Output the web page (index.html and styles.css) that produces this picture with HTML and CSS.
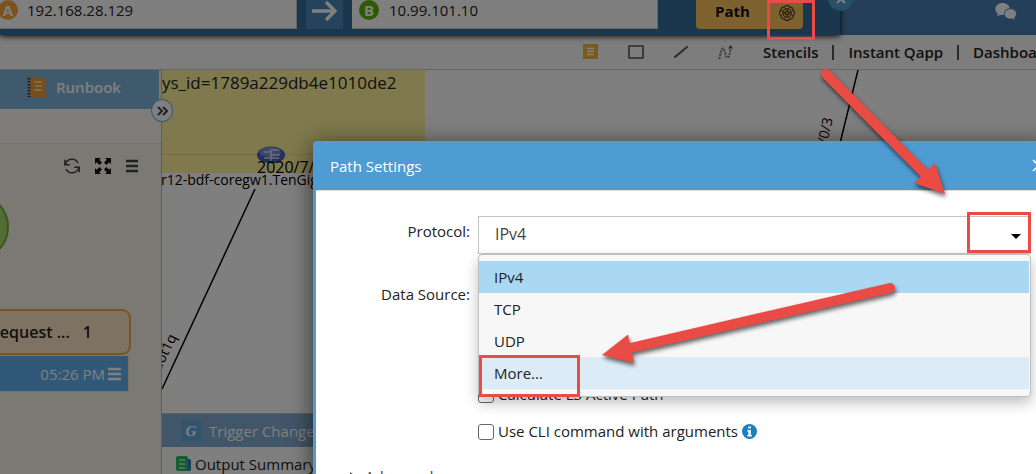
FILE: index.html
```html
<!DOCTYPE html>
<html lang="en">
<head>
<meta charset="utf-8">
<title>Path Settings</title>
<link rel="stylesheet" href="styles.css">
</head>
<body>
<div class="app">
  <header class="topbar">
    <form class="pathbar">
      <label class="endpoint source"><span class="badge badge-a">A</span><input type="text" value="192.168.28.129" aria-label="Source"></label>
      <button type="button" class="go" aria-label="Swap"><svg width="28" height="22" viewBox="0 0 28 22" fill="none" stroke="#fff" stroke-width="3.4"><path d="M1 11h24M15 2l9 9-9 9"/></svg></button>
      <label class="endpoint target"><span class="badge badge-b">B</span><input type="text" value="10.99.101.10" aria-label="Destination"></label>
      <div class="path-group">
        <button type="button" class="path-btn">Path</button>
        <button type="button" class="gear-btn" aria-label="Path settings"><svg width="16" height="16" viewBox="0 0 16 16" fill="none" stroke="#5c4a26" stroke-width="1.300"><path d="M5.500 2.200a2.600 2.600 0 0 1 5 0 2.600 2.600 0 0 1 3.300 3.300 2.600 2.600 0 0 1 0 5 2.600 2.600 0 0 1-3.300 3.300 2.600 2.600 0 0 1-5 0 2.600 2.600 0 0 1-3.300-3.300 2.600 2.600 0 0 1 0-5 2.600 2.600 0 0 1 3.300-3.300z"/><circle cx="8" cy="8" r="4.300"/><rect x="6.500" y="6.500" width="3" height="3"/><path d="M8 3.500v3M8 9.500v3M3.500 8h3M9.500 8h3"/></svg></button>
      </div>
      <button type="button" class="bar-close" aria-label="Close"><svg width="10" height="10" viewBox="0 0 10 10" stroke="#fff" stroke-width="2"><path d="M1 1l8 8M9 1L1 9"/></svg></button>
    </form>
    <button type="button" class="chat" aria-label="Chat"><svg width="22" height="18" viewBox="0 0 22 18" fill="#fff"><path d="M7.500 0C3.400 0 .3 2.700.3 6c0 1.900 1 3.500 2.500 4.600L2 13.300l3.400-1.600c.6.200 1.300.3 2 .3 4.200 0 7.300-2.600 7.300-6S11.700 0 7.500 0z"/><path d="M15.400 5.600c3.500 0 6.200 2.300 6.200 5.200 0 1.500-.8 2.900-2 3.800l.8 2.900-3.200-1.600c-.6.100-1.200.2-1.800.2-3.400 0-6.100-2.300-6.100-5.200s2.700-5.300 6.100-5.300z" stroke="#487eae"/></svg></button>
  </header>

  <nav class="toolbar">
    <button type="button" aria-label="Note"><svg width="16" height="16" viewBox="0 0 16 16"><path fill="#f3b934" d="M0 0h15v15H0z"/><path d="M4 4.500h7M4 7.500h7M4 10.500h7" stroke="#fff" stroke-width="1.500"/></svg></button>
    <button type="button" aria-label="Rectangle"><svg width="16" height="16" viewBox="0 0 16 16"><rect x="1" y="2" width="14" height="12" rx=".5" fill="none" stroke="#555" stroke-width="1.600"/></svg></button>
    <button type="button" aria-label="Line"><svg width="16" height="16" viewBox="0 0 16 16"><path d="M2 13L14 3" stroke="#555" stroke-width="2" stroke-linecap="round"/></svg></button>
    <button type="button" aria-label="Curve"><svg width="16" height="16" viewBox="0 0 16 16" fill="none" stroke="#777" stroke-width="1.800"><path d="M1.500 15C2 11 3 6 4.500 4.500 7 3 7 14 9.500 13.500c2-.5 2.500-5 3-9" stroke-dasharray="2.200 1"/><path d="M10 4.500L12.500 1 15 4.500z" fill="#555" stroke="none"/></svg></button>
    <a href="#">Stencils</a><span class="bar"></span><a href="#">Instant Qapp</a><span class="bar"></span><a href="#">Dashboard</a>
  </nav>

  <main class="workspace">
    <aside class="sidebar">
      <div class="tab">
        <svg width="20" height="20" viewBox="0 0 20 20"><path fill="#f39c32" d="M3 0h16v20H3z"/><path d="M7 5h8M8 9h7M7 13h8" stroke="#ffe4b8" stroke-width="1.500"/><path d="M2 1v19" stroke="#443c32" stroke-width="3" stroke-dasharray="1.500 1.500"/></svg>
        <span>Runbook</span>
      </div>
      <div class="side-head"></div>
      <div class="side-body">
        <div class="tools">
          <button type="button" aria-label="Refresh"><svg width="16" height="16" viewBox="0 0 16 16" fill="none" stroke="#444" stroke-width="1.500"><path d="M1.300 7A6.700 6.700 0 0 1 14 5M14.700 9A6.700 6.700 0 0 1 2 11"/><path d="M.8 1.800v5h5M15.200 14.200v-5h-5"/></svg></button>
          <button type="button" aria-label="Full screen"><svg width="16" height="16" viewBox="0 0 16 16" fill="#111"><path d="M0 0h6L4.200 1.800 7 4.600 4.600 7 1.800 4.200 0 6zM16 0v6l-1.800-1.800L11.400 7 9 4.600l2.800-2.800L10 0zM0 16v-6l1.800 1.800L4.600 9 7 11.400l-2.800 2.800L6 16zM16 16h-6l1.800-1.800L9 11.400 11.400 9l2.800 2.800L16 10z"/></svg></button>
          <button type="button" aria-label="Menu"><svg width="12" height="14" viewBox="0 0 12 14" stroke="#3c444b" stroke-width="2.600"><path d="M0 2h12M0 7h12M0 12h12"/></svg></button>
        </div>
        <svg class="status" width="10" height="70" viewBox="0 0 10 70"><circle cx="-25" cy="35" r="33" fill="#a5dc68" stroke="#77aa43" stroke-width="2"/></svg>
        <div class="card"><span>Request ...</span><span>1</span></div>
        <div class="time"><span>05:26 PM</span><svg width="13" height="14" viewBox="0 0 13 14" stroke="#fff" stroke-width="2.500"><path d="M0 2h13M0 7h13M0 12h13"/></svg></div>
      </div>
    </aside>

    <section class="content">
      <button type="button" class="splitter" aria-label="Expand"><svg width="11" height="10" viewBox="0 0 11 10" fill="none" stroke="#444" stroke-width="2"><path d="M1 1l4 4-4 4M6 1l4 4-4 4"/></svg></button>
      <div class="map">
        <div class="note">ys_id=1789a229db4e1010de2</div>
        <svg class="links" width="900" height="345" viewBox="0 0 900 345">
          <path d="M0 84.500h264" stroke="#f3df80"/>
          <path d="M93 119L0 319M696 0l-27 110" stroke="#000" stroke-width="1.500"/>
          <ellipse cx="109" cy="85" rx="14" ry="8.500" fill="#4862b8"/>
          <ellipse cx="108" cy="82" rx="11" ry="5" fill="#7890d2"/>
          <path d="M109 79v12M102 82h7M109 80h8M109 85h9M102 88h15" stroke="#d0dcf8" stroke-width="1.500" fill="none"/>
          <text class="node-text" x="95" y="103">2020/7/1</text>
          <text class="link-text" x="-1" y="115">r12-bdf-coregw1.TenGigE</text>
          <text class="link-text" transform="translate(671 49) rotate(-76)" text-anchor="end">0/0/3</text>
          <text class="link-text" transform="translate(15 267) rotate(-64)" text-anchor="end">dot1q</text>
        </svg>
      </div>
      <div class="panel">
        <div class="panel-head"><span class="g-icon">G</span><span>Trigger Change</span></div>
        <div class="panel-row"><svg width="15" height="16" viewBox="0 0 15 16"><rect x="3" y="3" width="12" height="12" rx="2" fill="#287ec8"/><rect width="12" height="15" rx="2" fill="#28bd60"/><path d="M3 4h6M3 8h6M3 12h6" stroke="#a9f2be" stroke-width="1.500"/></svg><span>Output Summary</span></div>
      </div>
    </section>
  </main>
</div>

<div class="overlay">
  <section class="dialog" role="dialog" aria-labelledby="dlg-title">
    <header class="dialog-head">
      <h1 id="dlg-title">Path Settings</h1>
      <button type="button" aria-label="Close"><svg width="13" height="13" viewBox="0 0 13 13" stroke="#fff" stroke-width="1.500"><path d="M1 1l11 11M12 1L1 12"/></svg></button>
    </header>
    <form class="dialog-body">
      <label for="protocol">Protocol:</label>
      <div class="control">
        <select id="protocol"><option>IPv4</option><option>TCP</option><option>UDP</option><option>More...</option></select>
        <svg class="caret" width="10" height="5" viewBox="0 0 10 5"><path d="M0 0h10L5 5z"/></svg>
        <ul class="menu" role="listbox">
          <li class="selected" role="option">IPv4</li>
          <li role="option">TCP</li>
          <li role="option">UDP</li>
          <li class="hover" role="option">More...</li>
        </ul>
      </div>
      <span class="source-label">Data Source:</span>
      <div class="options">
        <label><input type="checkbox"><span>Calculate L3 Active Path</span></label>
        <label><input type="checkbox"><span>Use CLI command with arguments</span><svg width="15" height="15" viewBox="0 0 15 15"><circle cx="7.500" cy="7.500" r="7.500" fill="#1c80b9"/><path d="M6.300 2.600h2.500v2H6.300zM5.400 6h3.400v5h1v1.400H5.300V11h1.100V7.400h-1z" fill="#fff"/></svg></label>
      </div>
      <button type="button" class="advanced"><svg width="6" height="9" viewBox="0 0 6 9" fill="#444"><path d="M0 0l6 4.500L0 9z"/></svg>Advanced</button>
    </form>
  </section>
</div>

<svg class="marks" width="1036" height="474" viewBox="0 0 1036 474">
  <g fill="none" stroke="#ea4b45" stroke-width="3">
    <path d="M768.500 1.500h45v37h-45zM968.500 213.500h61v38h-61zM480.500 356.500h98v39h-98z"/>
  </g>
  <g class="arrows" fill="#ea4b45" stroke="#ea4b45">
    <path d="M826 74l100 101M890 288l-264 61" stroke-width="10" stroke-linecap="round"/>
    <path d="M945 194l-10-31-21 20zM602 355l26-20.500 6 28.500z" stroke="none"/>
  </g>
</svg>
</body>
</html>
```
FILE: styles.css
```css
* { box-sizing: border-box; }
body {
  margin: 0;
  height: 100vh;
  overflow: hidden;
  position: relative;
  font: 15px/20px "Open Sans", "Noto Sans", sans-serif;
  color: #222;
}
button { border: 0; padding: 0; background: none; font: inherit; color: inherit; }
svg { display: block; flex: none; }
.app { height: 100%; display: flex; flex-direction: column; overflow: hidden; }

.topbar {
  flex: none;
  height: 35px;
  display: flex;
  align-items: flex-end;
  justify-content: space-between;
  background: #487eae;
}
.pathbar {
  position: relative;
  z-index: 1;
  width: 840px;
  height: 35px;
  display: flex;
  align-items: flex-end;
  padding-bottom: 6px;
  background: #366e9c;
  box-shadow: 0 1px 6px #000;
}
.endpoint {
  height: 37px;
  display: flex;
  align-items: center;
  gap: 7px;
  padding-bottom: 1px;
  background: #fff;
  border: 1px solid #ccc;
  border-left: 0;
}
.endpoint input {
  flex: 1;
  min-width: 0;
  border: 0;
  padding: 0;
  background: none;
  font: inherit;
  color: #222;
}
.source { width: 297px; }
.source .badge { margin-left: -2px; margin-right: 2px; }
.target { width: 306px; padding-left: 7px; gap: 10px; }
.badge {
  flex: none;
  width: 20px;
  height: 20px;
  border-radius: 50%;
  color: #fff;
  font-weight: 700;
  text-align: center;
}
.badge-a { background: #f5a63a; }
.badge-b { background: #61b30c; }
.go {
  width: 37px;
  height: 37px;
  margin: 0 9px;
  display: grid;
  place-items: center;
  background: #4a86b4;
}
.path-group {
  height: 37px;
  margin-left: 38px;
  display: flex;
  background: #fac460;
  border-radius: 4px;
}
.path-btn { width: 74px; font-weight: 700; color: #111; border-right: 1px solid #d9a54a; }
.gear-btn { width: 33px; display: grid; place-items: center; padding-top: 5px; }
.bar-close {
  position: absolute;
  right: -13px;
  top: -14px;
  width: 25px;
  height: 25px;
  display: grid;
  place-items: center;
  border-radius: 50%;
  background: #4d9fd3;
}
.chat { align-self: flex-start; padding: 3px 19px 0 0; }

.toolbar {
  flex: none;
  height: 35px;
  padding-left: 583px;
  display: flex;
  align-items: center;
  background: #fafafa;
  border-bottom: 1px solid #ccc;
}
.toolbar button { margin-right: 29px; }
.toolbar a { color: #222; font-weight: 600; text-decoration: none; white-space: nowrap; }
.bar { flex: none; width: 2px; height: 15px; margin: 0 14px; background: #555; }

.workspace { flex: 1; display: flex; min-height: 0; }
.sidebar { flex: none; width: 162px; overflow: hidden; border-right: 1px solid #bbb; background: #f7f3e9; }
.tab {
  height: 39px;
  width: 159px;
  padding: 0 0 5px 27px;
  display: flex;
  align-items: center;
  gap: 9px;
  background: #7eb4da;
  color: #fff;
  font-weight: 600;
}
.side-head { height: 35px; background: #fefaf2; border-bottom: 1px solid #f5ddca; }
.side-body { display: flex; flex-direction: column; align-items: flex-start; }
.tools { height: 43px; padding-left: 64px; display: flex; align-items: center; gap: 15px; }
.status { margin: 5px 0 47px; }
.card {
  width: 131px;
  height: 46px;
  padding: 0 37px 1px 0;
  display: flex;
  align-items: center;
  justify-content: flex-end;
  gap: 13px;
  border: 2px solid #efaa3d;
  border-left: 0;
  border-radius: 0 9px 9px 0;
  background: #fde6c4;
  font-size: 16px;
  font-weight: 600;
  white-space: nowrap;
}
.time {
  width: 129px;
  height: 36px;
  margin-top: 1px;
  padding-right: 7px;
  display: flex;
  align-items: center;
  justify-content: flex-end;
  gap: 3px;
  border: solid #f5ddca;
  border-width: 0 1px 1px 0;
  background: #62b0ee;
  color: #fff;
}

.content { position: relative; flex: 1; min-width: 0; display: flex; flex-direction: column; background: #fff; }
.splitter {
  position: absolute;
  z-index: 1;
  left: -11px;
  top: 29px;
  width: 22px;
  height: 23px;
  display: grid;
  place-items: center;
  border: 1px solid #75b0df;
  border-radius: 50%;
  background: #fff;
}
.map { position: relative; flex: 1; overflow: hidden; min-height: 0; }
.note { width: 263px; height: 103px; background: #fff29a; font-size: 17px; line-height: 26px; }
.links { position: absolute; left: 0; top: 0; }
.node-text { font-size: 16px; }
.link-text { font-size: 14px; }
.panel { flex: none; height: 61px; border-top: 1px solid #bbb; }
.panel-head {
  height: 33px;
  padding-left: 19px;
  display: flex;
  align-items: center;
  gap: 8px;
  background: #82acd0;
  color: #fff;
  font-weight: 500;
}
.g-icon {
  width: 20px;
  height: 20px;
  background: #66a9de;
  font: italic 700 15px/20px "Liberation Serif", serif;
  text-align: center;
}
.panel-row { height: 33px; padding-left: 14px; display: flex; align-items: center; gap: 4px; }

.overlay {
  position: absolute;
  inset: 0;
  z-index: 2;
  padding: 141px 0 0 313px;
  display: flex;
  overflow: hidden;
  background: rgba(0, 0, 0, .5);
}
.dialog {
  flex: 1;
  margin-right: -20px;
  border: solid #4f9cd2;
  border-width: 0 3px;
  border-radius: 4px 4px 0 0;
  background: #fff;
  box-shadow: 0 4px 24px rgba(0, 0, 0, .6);
}
.dialog-head {
  height: 49px;
  padding: 0 8px 0 14px;
  display: flex;
  align-items: center;
  justify-content: space-between;
  background: #4f9cd2;
  color: #fff;
}
.dialog-head h1 { margin: 0; font-size: 15px; font-weight: 500; }
.dialog-body {
  display: grid;
  grid-template-columns: 154px 1fr;
  column-gap: 8px;
  padding: 25px 22px 0 0;
  border-top: 1px solid #ddd;
}
.dialog-body > label, .source-label { padding-top: 5px; text-align: right; }
.control { position: relative; height: 38px; }
.control select {
  appearance: none;
  width: 100%;
  height: 38px;
  padding: 0 16px 2px;
  border: 1px solid #c4c4c4;
  border-radius: 0;
  background: #fff;
  font: inherit;
  font-size: 16px;
  color: #444;
}
.caret { position: absolute; right: 10px; top: 18px; }
.menu {
  position: absolute;
  z-index: 1;
  top: 38px;
  left: 0;
  right: 0;
  margin: 0;
  padding: 6px 1px 7px 0;
  border: 1px solid #c0c0c0;
  border-radius: 4px;
  background: #f7f7f7;
  box-shadow: 0 6px 14px rgba(0, 0, 0, .25);
  list-style: none;
}
.menu li { height: 32px; padding-left: 15px; line-height: 32px; }
.menu .selected { background: #aad7f1; }
.menu .hover { background: #dcecf6; }
.source-label { padding-top: 30px; }
.options { padding-top: 130px; display: flex; flex-direction: column; gap: 17px; }
.options label { display: flex; align-items: center; gap: 4px; }
.options input {
  appearance: none;
  width: 16px;
  height: 16px;
  margin: 1px 0 0;
  border: 1px solid #666;
  border-radius: 3px;
  background: #fff;
}
.advanced { grid-column: 1 / -1; justify-self: start; padding: 25px 0 0 34px; display: flex; align-items: center; gap: 9px; color: #444; }
.marks { position: absolute; z-index: 3; left: 0; top: 0; pointer-events: none; }
.arrows { filter: drop-shadow(1px 3px 2px rgba(0, 0, 0, .6)); }
```
